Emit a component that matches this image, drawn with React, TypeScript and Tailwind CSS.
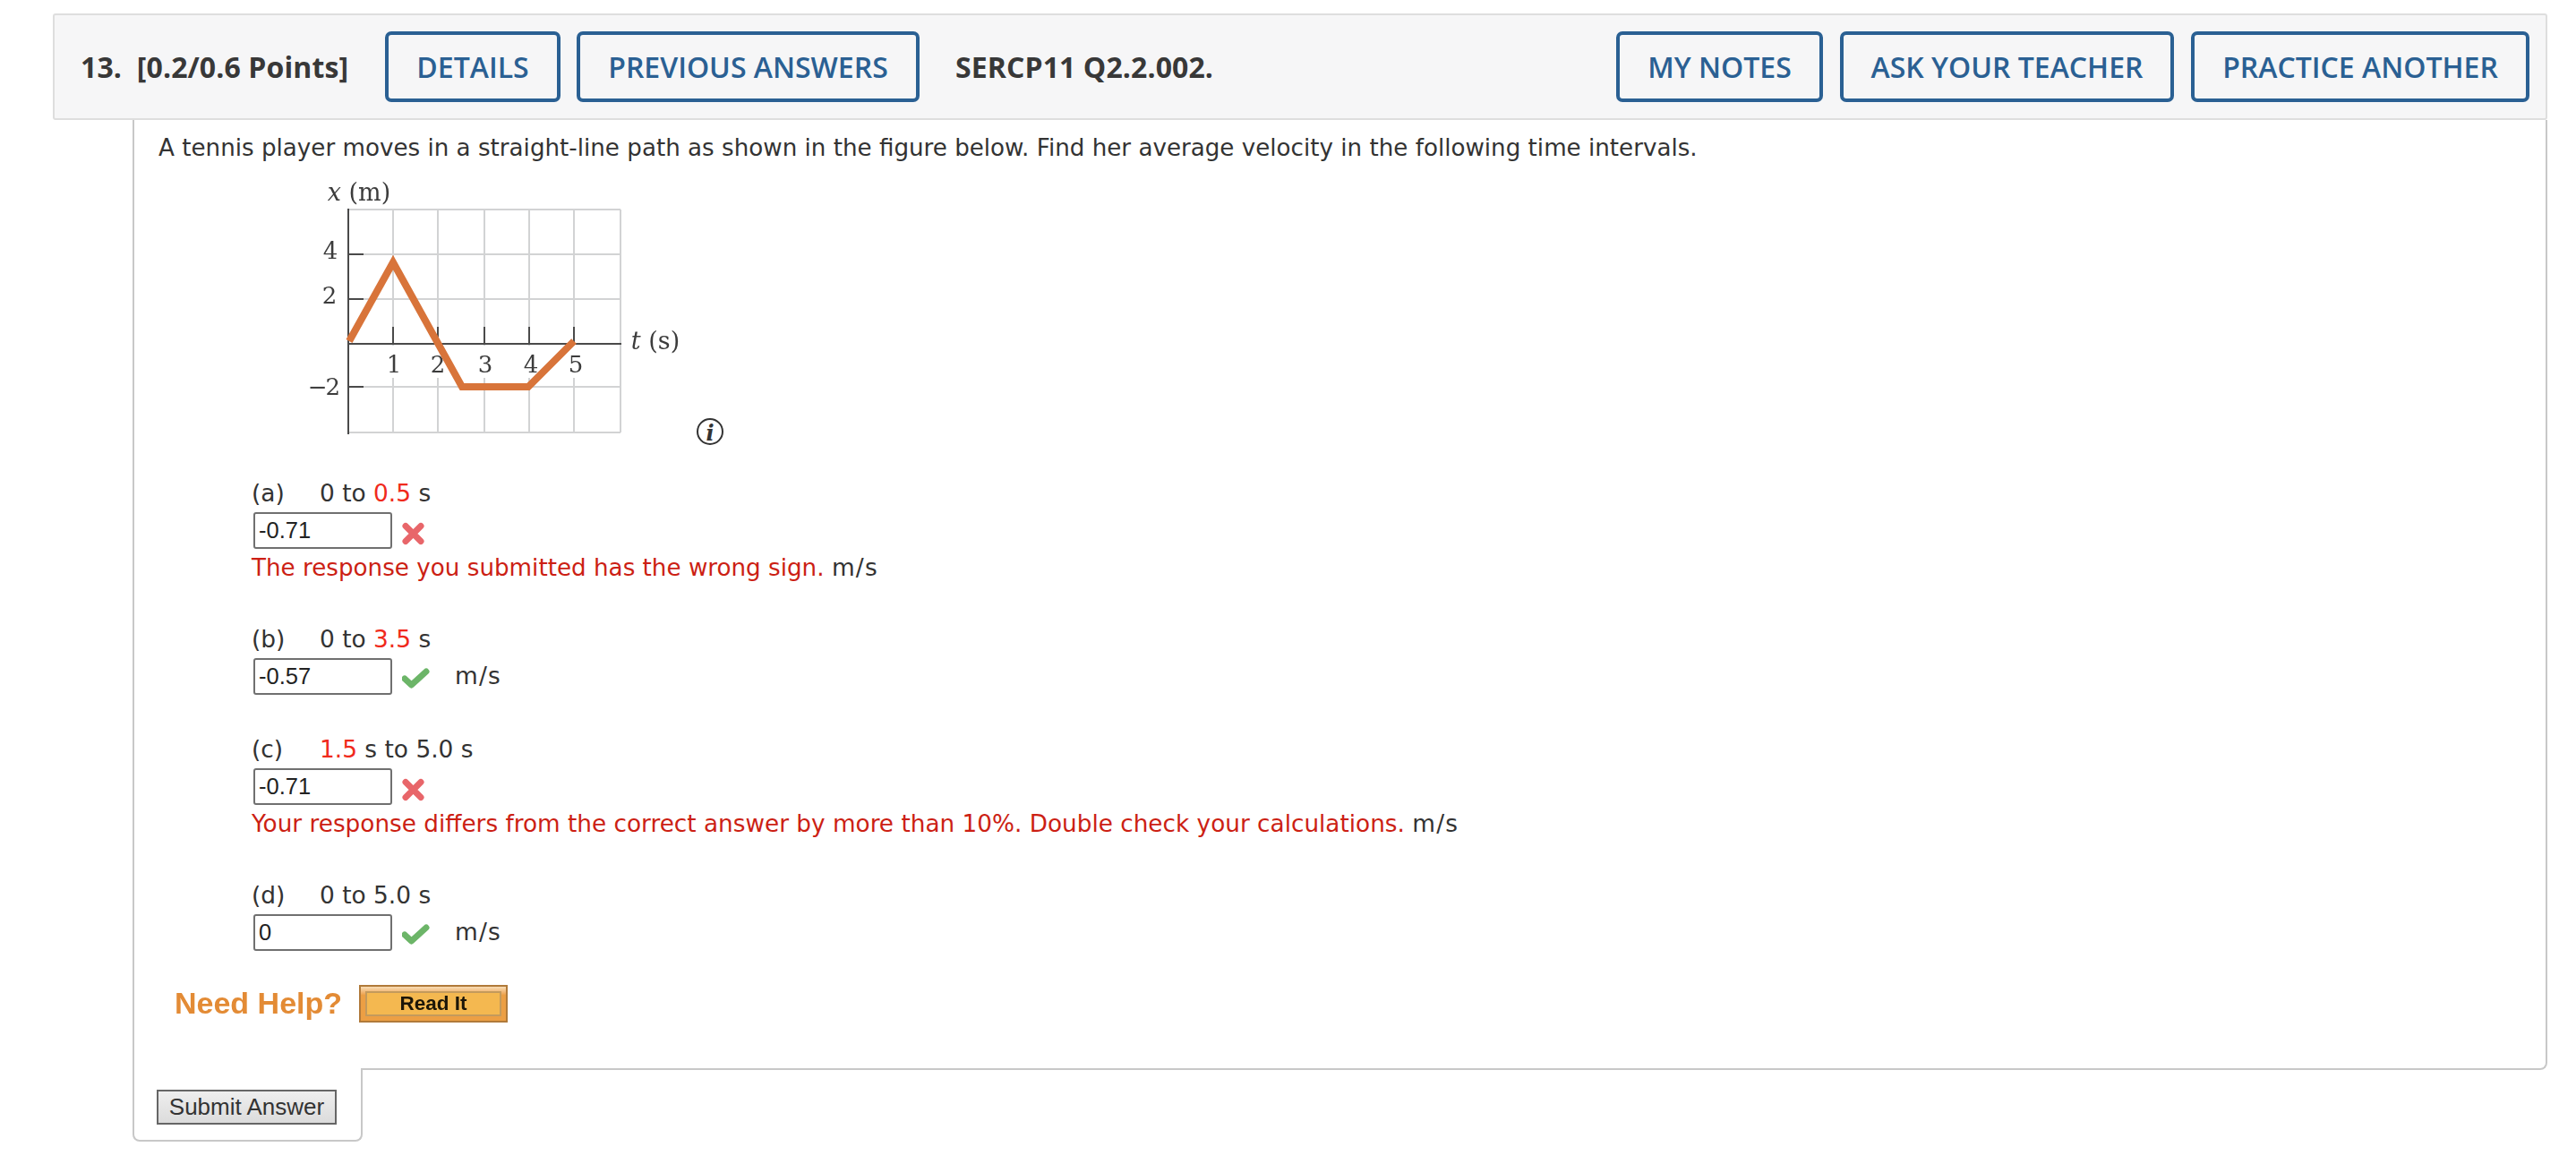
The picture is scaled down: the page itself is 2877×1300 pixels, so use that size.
const verdana = "font-['DejaVu_Sans',sans-serif]";

function Btn({ label, width }: { label: string; width: string }) {
  return (
    <button
      className={`${width} h-[79px] rounded-[7px] border-[4px] border-[#2a6093] text-[#2a6093] text-[32px] font-semibold font-['Open_Sans',sans-serif] text-center`}
    >
      {label}
    </button>
  );
}

function Answer({ value }: { value: string }) {
  return (
    <div className="w-[155px] h-[41px] rounded-[3px] border-2 border-[#707070] bg-white pl-[4px] flex items-center text-[25.5px] text-[#222] font-['Liberation_Sans',sans-serif]">
      {value}
    </div>
  );
}

function Cross() {
  return (
    <svg width="28" height="26" viewBox="0 0 28 26" className="ml-[10px] mt-[11px] blur-[0.6px]">
      <path d="M5 4.5 L22 21.5 M22 4.5 L5 21.5" stroke="#e8666a" strokeWidth="7" strokeLinecap="round" />
    </svg>
  );
}

function Check() {
  return (
    <svg width="32" height="26" viewBox="0 0 32 26" className="ml-[11px] mt-[10px] blur-[0.6px]">
      <polyline points="3,13 10.5,20 27,5" fill="none" stroke="#6cb568" strokeWidth="7" strokeLinejoin="round" strokeLinecap="round" />
    </svg>
  );
}

function Unit() {
  return <span className="tracking-[1.2px]">m/s</span>;
}

function Label({ part, children }: { part: string; children: React.ReactNode }) {
  return (
    <div className="h-[36px] leading-[36px] flex">
      <span className="w-[76px]">({part})</span>
      <span>{children}</span>
    </div>
  );
}

function Red({ children }: { children: React.ReactNode }) {
  return <span className="text-[#f02a1c]">{children}</span>;
}

function Graph() {
  const verticals = [119, 169, 221, 271, 321];
  const horizontals = [43, 93, 143, 241, 292];
  return (
    <svg width="510" height="320" viewBox="0 0 510 320" className="block ml-[143px] mt-[8px]">
      <g className="blur-[0.5px]">
        <g stroke="#d2d3d4" strokeWidth="2" fill="none">
          {verticals.map((x) => (
            <line key={x} x1={x} y1="43" x2={x} y2="292" />
          ))}
          <line x1="373" y1="43" x2="373" y2="292" />
          {horizontals.map((y) => (
            <line key={y} x1="69" y1={y} x2="373" y2={y} />
          ))}
        </g>
        <g stroke="#4a4a4a" strokeWidth="2" fill="none">
          <line x1="69" y1="42" x2="69" y2="294" />
          <line x1="69" y1="193" x2="374" y2="193" />
          {[93, 143, 241].map((y) => (
            <line key={y} x1="69" y1={y} x2="86" y2={y} />
          ))}
          {verticals.map((x) => (
            <line key={x} x1={x} y1="174" x2={x} y2="193" />
          ))}
        </g>
        <g fill="white">
          {verticals.map((x) => (
            <rect key={x} x={x - 3} y="195" width="6" height="36" />
          ))}
        </g>
        <g fontFamily="'DejaVu Serif', serif" fontSize="26" fill="#3c3c3c" textAnchor="middle">
          <text x="120" y="225">1</text>
          <text x="169" y="225">2</text>
          <text x="222" y="225">3</text>
          <text x="273" y="225">4</text>
          <text x="323" y="225">5</text>
          <text x="49" y="98">4</text>
          <text x="48" y="148">2</text>
          <text x="41" y="250" letterSpacing="-2">−2</text>
          <text x="81" y="33" fontSize="27"><tspan fontStyle="italic">x</tspan> (m)</text>
          <text x="412" y="199" fontSize="27"><tspan fontStyle="italic">t</tspan> (s)</text>
        </g>
        <polyline
          points="70,190 119,102 196,241 270,241 321,190"
          fill="none"
          stroke="#d8743a"
          strokeWidth="8"
          strokeLinejoin="miter"
        />
      </g>
      <circle cx="473" cy="291" r="14" fill="white" stroke="#333" strokeWidth="2" />
      <text x="473" y="301" textAnchor="middle" fontFamily="'DejaVu Serif', serif" fontStyle="italic" fontWeight="bold" fontSize="24" fill="#333">i</text>
    </svg>
  );
}

export default function App() {
  return (
    <div className="min-h-[1300px] bg-white pt-[15px] pl-[59px] w-[2877px] text-[#333]">
      <div className="w-[2786px] h-[119px] rounded-[3px] border-2 border-[#dedede] bg-[#f6f6f7] flex items-center pl-[29px] pr-[18px]">
        <span className="w-[340px] shrink-0 text-[32px] font-bold text-[#383838] font-['Open_Sans',sans-serif] tracking-[0.1px] whitespace-pre">
          13.  [0.2/0.6 Points]
        </span>
        <div className="flex gap-[18px]">
          <Btn label="DETAILS" width="w-[196px]" />
          <Btn label="PREVIOUS ANSWERS" width="w-[383px]" />
        </div>
        <span className="ml-[40px] text-[32px] font-bold text-[#383838] font-['Open_Sans',sans-serif] tracking-[0.1px]">
          SERCP11 Q2.2.002.
        </span>
        <div className="ml-auto flex gap-[19px]">
          <Btn label="MY NOTES" width="w-[231px]" />
          <Btn label="ASK YOUR TEACHER" width="w-[373px]" />
          <Btn label="PRACTICE ANOTHER" width="w-[378px]" />
        </div>
      </div>

      <div className={`ml-[89px] w-[2697px] ${verdana} text-[26.4px]`}>
        <div className="h-[1061px] border-x-2 border-b-2 border-[#c8c8c8] rounded-br-[8px] pl-[27px] pt-[13px]">
          <div className="h-[36px] leading-[36px] text-[26.17px]">
            A tennis player moves in a straight-line path as shown in the figure below. Find her average velocity in the following time intervals.
          </div>
          <Graph />

          <div className="ml-[104px] mt-[22px]">
            <Label part="a">
              0 to <Red>0.5</Red> s
            </Label>
            <div className="ml-[2px] mt-[3px] flex">
              <Answer value="-0.71" />
              <Cross />
            </div>
            <div className="h-[36px] leading-[36px] mt-[3px]">
              <span className="text-[#cc1f14] text-[26.2px]">The response you submitted has the wrong sign.</span> <Unit />
            </div>
          </div>

          <div className="ml-[104px] mt-[44px]">
            <Label part="b">
              0 to <Red>3.5</Red> s
            </Label>
            <div className="ml-[2px] mt-[3px] flex">
              <Answer value="-0.57" />
              <Check />
              <span className="ml-[27px] leading-[39px]">
                <Unit />
              </span>
            </div>
          </div>

          <div className="ml-[104px] mt-[43px]">
            <Label part="c">
              <Red>1.5</Red> s to 5.0 s
            </Label>
            <div className="ml-[2px] mt-[3px] flex">
              <Answer value="-0.71" />
              <Cross />
            </div>
            <div className="h-[36px] leading-[36px] mt-[3px]">
              <span className="text-[#cc1f14] text-[26.3px]">
                Your response differs from the correct answer by more than 10%. Double check your calculations.
              </span>{" "}
              <Unit />
            </div>
          </div>

          <div className="ml-[104px] mt-[44px]">
            <Label part="d">0 to 5.0 s</Label>
            <div className="ml-[2px] mt-[3px] flex">
              <Answer value="0" />
              <Check />
              <span className="ml-[27px] leading-[39px]">
                <Unit />
              </span>
            </div>
          </div>

          <div className="ml-[18px] mt-[38px] h-[42px] flex items-center">
            <span className="w-[185px] pb-[2px] shrink-0 whitespace-nowrap text-[34px] leading-none font-bold text-[#e38b35] font-['Liberation_Sans',sans-serif] blur-[0.5px]">
              Need Help?
            </span>
            <div className="ml-[21px] w-[166px] h-[42px] border-2 border-[#b07a3a] bg-gradient-to-b from-[#f8dcb4] via-[#ec9f44] via-[25%] to-[#ec9f44] p-[5px]">
              <div className="h-full border-2 border-[#c39a5c] bg-[#f4b850] flex items-center justify-center text-[22.5px] font-bold text-[#1c1608] font-['Liberation_Sans',sans-serif]">
                <span className="blur-[0.4px]">Read It</span>
              </div>
            </div>
          </div>
        </div>

        <div className="relative -mt-[2px] w-[257px] h-[82px] bg-white border-x-2 border-b-2 border-[#c8c8c8] rounded-b-[8px] pl-[25px] pt-[23px]">
          <button className="w-[201px] h-[39px] border-2 border-[#666] bg-gradient-to-b from-[#eeeeee] to-[#dcdcdc] text-[26px] leading-none text-[#333] font-['Liberation_Sans',sans-serif]">
            Submit Answer
          </button>
        </div>
      </div>
    </div>
  );
}
